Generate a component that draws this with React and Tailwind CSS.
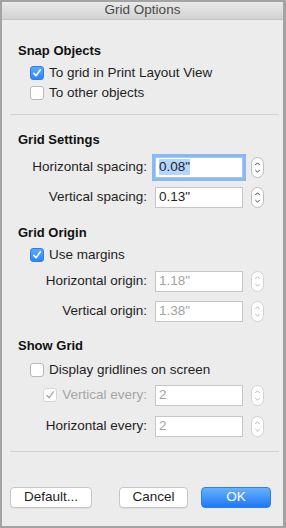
import React from 'react';

const font = { fontFamily: '"Liberation Sans", Arial, sans-serif' };

const Check = ({ checked, disabled }) => {
    if (checked && !disabled) {
        return (
            <div className="w-[14px] h-[14px] rounded-[3px] bg-gradient-to-b from-[#5aa9fc] to-[#2a86f8] border border-[#2b7ee6] flex items-center justify-center shrink-0">
                <svg width="10" height="10" viewBox="0 0 10 10">
                    <path d="M1.8 5.4 L4 7.8 L8.4 1.8" fill="none" stroke="#fff" strokeWidth="1.6" strokeLinecap="round" strokeLinejoin="round" />
                </svg>
            </div>
        );
    }
    return (
        <div className={`w-[14px] h-[14px] rounded-[3px] bg-white border flex items-center justify-center shrink-0 ${disabled ? 'border-[#d6d6d6]' : 'border-[#b8b8b8]'}`}>
            {checked && (
                <svg width="10" height="10" viewBox="0 0 10 10">
                    <path d="M1.8 5.4 L4 7.8 L8.4 1.8" fill="none" stroke="#a8a8a8" strokeWidth="1.4" strokeLinecap="round" strokeLinejoin="round" />
                </svg>
            )}
        </div>
    );
};

const Stepper = ({ disabled }) => (
    <svg width="13" height="21" viewBox="0 0 13 21" className="shrink-0">
        <rect x="0.5" y="0.5" width="12" height="20" rx="6" fill="#fff" stroke={disabled ? '#d2d2d2' : '#bdbdbd'} />
        <path d="M4.3 8 L6.5 5.8 L8.7 8" fill="none" stroke={disabled ? '#b8b8b8' : '#4a4a4a'} strokeWidth="1" />
        <path d="M4.3 13 L6.5 15.2 L8.7 13" fill="none" stroke={disabled ? '#b8b8b8' : '#4a4a4a'} strokeWidth="1" />
    </svg>
);

const CheckRow = ({ checked, label, className = '' }) => (
    <div className={`h-[20px] flex items-center pl-[28px] gap-[5px] ${className}`}>
        <Check checked={checked} />
        <span className="text-[13.5px] text-[#1e1e1e]">{label}</span>
    </div>
);

const Field = ({ label, value, focused, disabled, prefix, className = '' }) => (
    <div className={`h-[22px] flex items-center ${className}`}>
        <div className="w-[145px] flex items-center justify-end gap-[5px]">
            {prefix}
            <span className={`text-[13.5px] ${disabled && prefix ? 'text-[#a6a6a6]' : 'text-[#1e1e1e]'}`}>{label}</span>
        </div>
        <div className={`ml-[8px] w-[88px] h-[21px] bg-white flex items-center pl-[3px] ${focused ? 'border border-[#a9c8ef] ring-[3px] ring-[#8ab8f2]' : 'border border-[#c6c6c6]'}`}>
            <span className={`text-[13.5px] leading-[16px] ${disabled ? 'text-[#a3a3a3]' : 'text-[#1e1e1e]'} ${focused ? 'bg-[#b4d5fe]' : ''}`}>{value}</span>
        </div>
        <div className="ml-[8px]">
            <Stepper disabled={disabled} />
        </div>
    </div>
);

const Heading = ({ children, className = '' }) => (
    <div className={`h-[16px] flex items-center pl-[16px] text-[13px] font-bold text-[#111] ${className}`}>{children}</div>
);

const Button = ({ children, primary, className = '' }) => (
    <div
        className={`h-[21px] rounded-[4px] flex items-center justify-center text-[13.5px] ${primary
            ? 'bg-gradient-to-b from-[#67b0fd] to-[#1b78f6] border border-[#2c80ee] text-white'
            : 'bg-white border border-[#c6c6c6] text-[#1e1e1e] shadow-[0_1px_0_rgba(0,0,0,0.06)]'} ${className}`}
    >
        {children}
    </div>
);

export default function App() {
    return (
        <div style={font} className="w-[286px] h-[528px] bg-[#ececec] border-t-2 border-l-2 border-b-2 border-r-[3px] border-[#a3a3a3] flex flex-col overflow-hidden">
            <div className="h-[18px] shrink-0 bg-gradient-to-b from-[#e9e9e9] to-[#d2d2d2] border-b border-[#c4c4c4] flex items-center justify-center text-[13.5px] text-[#4a4a4a]">
                Grid Options
            </div>

            <Heading className="mt-[23px]">Snap Objects</Heading>
            <CheckRow checked label="To grid in Print Layout View" className="mt-[4px]" />
            <CheckRow label="To other objects" />
            <div className="mt-[11px] ml-[8px] mr-[4px] h-px bg-[#d2d2d2]" />

            <Heading className="mt-[17px]">Grid Settings</Heading>
            <Field label="Horizontal spacing:" value={'0.08"'} focused className="mt-[8px]" />
            <Field label="Vertical spacing:" value={'0.13"'} className="mt-[8px]" />

            <Heading className="mt-[17px]">Grid Origin</Heading>
            <CheckRow checked label="Use margins" className="mt-[4px]" />
            <Field label="Horizontal origin:" value={'1.18"'} disabled className="mt-[5px]" />
            <Field label="Vertical origin:" value={'1.38"'} disabled className="mt-[8px]" />

            <Heading className="mt-[16px]">Show Grid</Heading>
            <CheckRow label="Display gridlines on screen" className="mt-[6px]" />
            <Field label="Vertical every:" value="2" disabled prefix={<Check checked disabled />} className="mt-[4px]" />
            <Field label="Horizontal every:" value="2" disabled className="mt-[9px]" />
            <div className="mt-[14px] ml-[8px] mr-[4px] h-px bg-[#d2d2d2]" />

            <div className="mt-[35px] flex items-center pl-[8px]">
                <Button className="w-[82px]">Default...</Button>
                <Button className="w-[69px] ml-[27px]">Cancel</Button>
                <Button primary className="w-[70px] ml-[13px]">OK</Button>
            </div>
        </div>
    );
}
